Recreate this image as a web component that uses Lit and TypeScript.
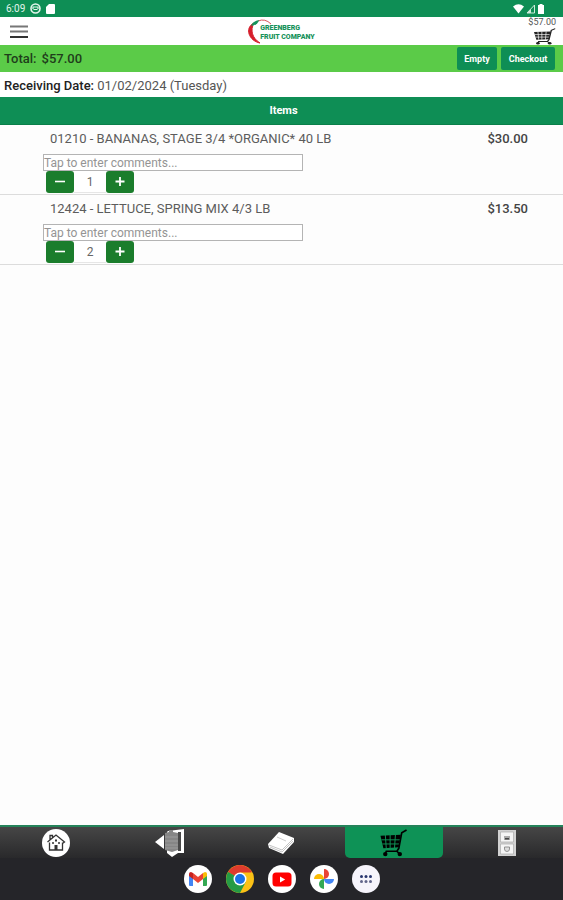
import { LitElement, html, css, svg } from "lit";
import { customElement, property, state } from "lit/decorators.js";
import { classMap } from "lit/directives/class-map.js";

interface CartItem {
  code: string;
  name: string;
  price: string;
  qty: number;
}

const cartShape = svg`
  <path d="M0 7 L21 6 L19 19 L3 20 Z" fill="currentColor"/>
  <path d="M1 11.200 H20.500 M2 15.500 H20 M5 6 L6 20 M10 6 V20 M15.500 6 L14.500 20" class="mesh"/>
  <path d="M27 1 L22 4 L19 20 L17 23 H6 L5 26 M17 23 L20 26" fill="none" stroke="currentColor" stroke-width="1.700"/>
  <circle cx="5" cy="26" r="2.300" fill="currentColor"/>
  <circle cx="20" cy="26" r="2.300" fill="currentColor"/>`;

const homeIcon = html`<svg width="30" height="30" viewBox="0 0 30 30" aria-hidden="true">
  <circle cx="15" cy="15" r="14" fill="#fff"/>
  <g fill="none" stroke="#333" stroke-width="1.300">
    <path d="M6.500 14 L15 7 L23.500 14 L21.500 15.500 M8.500 14.500 V22 H21.500 V14.500 M9 11.500 V7.500 H11.500 V9.500"/>
    <path d="M11 15 H13 M17 15 H19"/>
  </g>
  <path d="M13.500 22 V17 H16.500 V22 Z M14 11.500 H16 V13.500 H14 Z" fill="#333"/>
</svg>`;

const exitIcon = html`<svg width="30" height="30" viewBox="0 0 30 30" aria-hidden="true">
  <path d="M14 3 L30 1 V25 H24 L18 29 L13 25 V4 Z" fill="#fff"/>
  <path d="M24 4 H27 V23 H24 Z" fill="#4a4a4a"/>
  <path d="M11 5 L15 4 V2 H19 V4 L24 5 V22 L18 24 L11 22 Z" fill="#868686"/>
  <path d="M11 9 H24 M11 13 H24 M11 17 H24 M11 20 H24" stroke="#9c9c9c"/>
  <path d="M1 14 L10 7 V21 Z" fill="#fff"/>
</svg>`;

const bookIcon = html`<svg width="26" height="24" viewBox="0 0 26 24" aria-hidden="true">
  <path d="M0 13 L11 1 L26 7 V11 L15 23 L1 17 Z" fill="#fff"/>
  <path d="M1 14 L14 19 L25 8 M2 16 L14 21 L25 10" fill="none" stroke="#aaa" stroke-width=".7"/>
  <path d="M9 6 L18 10" stroke="#ccc" fill="none"/>
</svg>`;

const cartIcon = html`<svg width="28" height="28" viewBox="0 0 28 29" aria-hidden="true">${cartShape}</svg>`;

const cabinetIcon = html`<svg width="18" height="28" viewBox="0 0 18 28" aria-hidden="true">
  <path d="M0 1 H18 V27 H0 Z" fill="#d2d2d2"/>
  <path d="M2.500 3 H15.500 V13 H2.500 Z M2.500 15 H15.500 V25 H2.500 Z" fill="#f5f5f5" stroke="#aaa" stroke-width=".7"/>
  <path d="M6 7 H12 V11 H6 Z" fill="#aaa"/>
  <path d="M7 9 H11 V10.500 H7 Z" fill="#444"/>
  <path d="M6.500 18 H11.500 V20 A2.500 2.500 0 0 1 6.500 20 Z" fill="#ddd" stroke="#888" stroke-width=".9"/>
</svg>`;

const gmailIcon = html`<svg width="28" height="28" viewBox="0 0 28 28" aria-hidden="true">
  <circle cx="14" cy="14" r="14" fill="#fff"/>
  <path d="M5 8.500 L9 11.500 V21 H6 Q5 21 5 20 Z" fill="#4285f4"/>
  <path d="M23 8.500 L19 11.500 V21 H22 Q23 21 23 20 Z" fill="#34a853"/>
  <path d="M19 8 L21 7 Q23 7 23 9 V11 L19 14 Z" fill="#fbbc04"/>
  <path d="M5 11 V9 Q5 7 7 7 L9 8 V14 Z" fill="#c5221f"/>
  <path d="M9 8 L14 12 L19 8 V14 L14 18 L9 14 Z" fill="#ea4335"/>
</svg>`;

const chromeIcon = html`<svg width="28" height="28" viewBox="0 0 28 28" aria-hidden="true">
  <circle cx="14" cy="14" r="14" fill="#fbc116"/>
  <path d="M14 14 L1.900 7 A14 14 0 0 1 26.100 7 Z" fill="#de3b2d"/>
  <path d="M1.900 7 A14 14 0 0 0 14 28 L19.600 17.200 L14 14 Z" fill="#259b45"/>
  <path d="M14 7.500 H26.100 L19.600 17.200 Z" fill="#fbc116"/>
  <path d="M1.900 7 L8.400 17.200 L14 14 Z" fill="#259b45"/>
  <circle cx="14" cy="14" r="6.500" fill="#fff"/>
  <circle cx="14" cy="14" r="5" fill="#1a73e8"/>
</svg>`;

const youtubeIcon = html`<svg width="28" height="28" viewBox="0 0 28 28" aria-hidden="true">
  <circle cx="14" cy="14" r="14" fill="#fff"/>
  <rect x="4.500" y="7.500" width="19" height="14" rx="3.500" fill="#f00"/>
  <path d="M12 11.500 L17.200 14.500 L12 17.500 Z" fill="#fff"/>
</svg>`;

const photosIcon = html`<svg width="28" height="28" viewBox="0 0 28 28" aria-hidden="true">
  <circle cx="14" cy="14" r="14" fill="#fff"/>
  <path d="M14 14 V4 A5 5 0 0 1 14 14 Z" fill="#ea4335"/>
  <path d="M14 14 H24 A5 5 0 0 1 14 14 Z" fill="#4285f4"/>
  <path d="M14 14 V24 A5 5 0 0 1 14 14 Z" fill="#34a853"/>
  <path d="M14 14 H4 A5 5 0 0 1 14 14 Z" fill="#fbbc04"/>
</svg>`;

const appsIcon = html`<svg width="28" height="28" viewBox="0 0 28 28" aria-hidden="true">
  <circle cx="14" cy="14" r="14" fill="#f6f4fb"/>
  <g fill="#28356e">
    <circle cx="9.500" cy="11.500" r="1.500"/><circle cx="14" cy="11.500" r="1.500"/><circle cx="18.500" cy="11.500" r="1.500"/>
  </g>
  <g fill="#62668a">
    <circle cx="9.500" cy="16.500" r="1.500"/><circle cx="14" cy="16.500" r="1.500"/><circle cx="18.500" cy="16.500" r="1.500"/>
  </g>
</svg>`;

@customElement("cart-row")
export class CartRow extends LitElement {
  @property({ attribute: false }) item!: CartItem;

  static styles = css`
    :host {
      display: block;
      height: 70px;
      box-sizing: border-box;
      border-bottom: 1px solid #dcdcdc;
      color: #5c5c5c;
      font-size: 13px;
    }
    .line {
      display: flex;
      justify-content: space-between;
      padding: 4px 35px 0 50px;
      height: 29px;
      box-sizing: border-box;
      line-height: 20px;
    }
    .price {
      font-weight: 500;
      color: #444;
    }
    .entry {
      margin-left: 43px;
    }
    .comment {
      display: block;
      box-sizing: border-box;
      width: 50%;
      height: 17px;
      margin: 0;
      padding: 0;
      border: 1px solid #b4b4b4;
      border-radius: 0;
      background: #fff;
      color: #555;
      font: 12px/15px Roboto, sans-serif;
    }
    .comment::placeholder {
      color: #949494;
      opacity: 1;
    }
    .stepper {
      display: flex;
      margin-left: 3px;
      height: 22px;
    }
    .step {
      display: flex;
      align-items: center;
      justify-content: center;
      width: 28px;
      padding: 0;
      border: 0;
      border-radius: 3px;
      background: #1b7d2c;
      color: #fff;
    }
    .qty {
      width: 32px;
      box-sizing: border-box;
      padding: 0;
      border: 0;
      border-bottom: 1px solid #e6e6e6;
      border-radius: 0;
      background: #fff;
      color: #666;
      text-align: center;
      font: 12px/20px Roboto, sans-serif;
    }
  `;

  private change(delta: number) {
    this.item = { ...this.item, qty: Math.max(0, this.item.qty + delta) };
  }

  render() {
    const { code, name, price, qty } = this.item;
    return html`
      <div class="line">
        <span>${code} - ${name}</span>
        <span class="price">${price}</span>
      </div>
      <div class="entry">
        <input class="comment" type="text" aria-label="Comments" placeholder="Tap to enter comments..." />
        <div class="stepper">
          <button class="step" aria-label="Decrease" @click=${() => this.change(-1)}>
            <svg width="10" height="10" viewBox="0 0 10 10"><path d="M0 4.500 H10" stroke="#fff" stroke-width="1.600"/></svg>
          </button>
          <input class="qty" type="text" inputmode="numeric" aria-label="Quantity" .value=${String(qty)} />
          <button class="step" aria-label="Increase" @click=${() => this.change(1)}>
            <svg width="10" height="10" viewBox="0 0 10 10"><path d="M.5 4.500 H9.500 M5 0 V9" stroke="#fff" stroke-width="1.800"/></svg>
          </button>
        </div>
      </div>
    `;
  }
}

@customElement("app-root")
export class AppRoot extends LitElement {
  @state() private activeTab = "Cart";

  private items: CartItem[] = [
    { code: "01210", name: "BANANAS, STAGE 3/4 *ORGANIC* 40 LB", price: "$30.00", qty: 1 },
    { code: "12424", name: "LETTUCE, SPRING MIX 4/3 LB", price: "$13.50", qty: 2 },
  ];

  private tabs = [
    { label: "Home", icon: homeIcon },
    { label: "Exit", icon: exitIcon },
    { label: "Catalog", icon: bookIcon },
    { label: "Cart", icon: cartIcon },
    { label: "Orders", icon: cabinetIcon },
  ];

  private apps = [
    { label: "Gmail", icon: gmailIcon },
    { label: "Chrome", icon: chromeIcon },
    { label: "YouTube", icon: youtubeIcon },
    { label: "Photos", icon: photosIcon },
    { label: "All apps", icon: appsIcon },
  ];

  static styles = css`
    :host {
      display: flex;
      flex-direction: column;
      min-height: 100vh;
      background: #fdfdfd;
      color: #333;
      font-family: Roboto, sans-serif;
      font-size: 13px;
    }
    svg {
      display: block;
    }
    button {
      padding: 0;
      border: 0;
      background: none;
      font-family: inherit;
    }
    .status {
      display: flex;
      align-items: center;
      gap: 5px;
      height: 17px;
      padding: 0 18px 0 6px;
      background: #0e8e55;
      color: #e4f5ec;
      font-size: 10px;
    }
    .signals {
      display: flex;
      gap: 2px;
      margin-left: auto;
    }
    .header {
      display: grid;
      grid-template-columns: 1fr auto 1fr;
      align-items: center;
      height: 28px;
      padding: 0 7px 0 10px;
      background: #fff;
    }
    .menu {
      justify-self: start;
    }
    .brand {
      display: flex;
      align-items: center;
      padding-right: 4px;
    }
    .brand-name {
      margin-left: -12px;
      padding-top: 4px;
      color: #16925a;
      font-size: 7px;
      font-weight: 900;
      line-height: 9px;
    }
    .brand-name span {
      display: block;
    }
    .mini-cart {
      display: flex;
      flex-direction: column;
      align-items: flex-end;
      justify-self: end;
      color: #222;
    }
    .mini-total {
      color: #555;
      font-size: 9px;
      line-height: 11px;
    }
    .mesh {
      fill: none;
      stroke: var(--mesh, #fff);
      stroke-width: 1;
    }
    .totals {
      display: flex;
      align-items: center;
      gap: 4px;
      height: 27px;
      padding: 0 8px 0 4px;
      background: #5bcb48;
      color: #1f3d1b;
    }
    .total {
      display: flex;
      gap: 5px;
      margin-right: auto;
      font-weight: 500;
    }
    .action {
      height: 23px;
      border-radius: 2px;
      background: #0e8e55;
      color: #fff;
      font-size: 9px;
      font-weight: 700;
    }
    .empty {
      width: 40px;
    }
    .checkout {
      width: 54px;
    }
    .date {
      padding: 0 4px;
      color: #555;
      line-height: 27px;
      height: 25px;
      background: #fff;
    }
    .date strong {
      color: #222;
      font-weight: 500;
    }
    .section {
      margin: 0;
      height: 28px;
      box-sizing: border-box;
      border-bottom: 1px solid #0a7f4a;
      padding-left: 4px;
      background: #0e8e55;
      color: #fff;
      font-size: 11px;
      font-weight: 700;
      line-height: 27px;
      text-align: center;
    }
    .list {
      flex: 1;
    }
    .tabs {
      display: flex;
      height: 33px;
      box-sizing: border-box;
      border-top: 2px solid #25835a;
      background: linear-gradient(#464646, #29292b);
    }
    .tab {
      display: flex;
      flex: 1;
      align-items: center;
      justify-content: center;
      margin: 0 7px;
      border-radius: 0 0 5px 5px;
      color: #000;
    }
    .active {
      --mesh: #0e9256;
      background: #0e9256;
    }
    .dock {
      display: flex;
      justify-content: center;
      gap: 14px;
      height: 42px;
      padding-top: 7px;
      box-sizing: border-box;
      background: #252529;
    }
    .dock button {
      height: 28px;
    }
  `;

  render() {
    return html`
      <div class="status">
        <span>6:09</span>
        <svg width="11" height="11" viewBox="0 0 11 11" aria-hidden="true">
          <circle cx="5.500" cy="5.500" r="4.500" fill="none" stroke="#e4f5ec" stroke-width="1.600"/>
          <path d="M3 6 V4 H8 V6 M3.500 6.500 H7.500" fill="none" stroke="#e4f5ec" stroke-width="1.200"/>
        </svg>
        <svg width="9" height="10" viewBox="0 0 9 10" aria-hidden="true">
          <path d="M3 0 H8 Q9 0 9 1 V9 Q9 10 8 10 H1 Q0 10 0 9 V3 Z" fill="#fff"/>
        </svg>
        <span class="signals">
          <svg width="11" height="10" viewBox="0 0 11 10" aria-hidden="true"><path d="M0 2.500 Q5.500 -2 11 2.500 L5.500 9.500 Z" fill="#fff"/></svg>
          <svg width="9" height="10" viewBox="0 0 9 10" aria-hidden="true">
            <path d="M1 9 L8.500 1 V9 Z" fill="none" stroke="#cfeadb"/><path d="M1 9 L5 5 V9 Z" fill="#cfeadb"/>
          </svg>
          <svg width="8" height="10" viewBox="0 0 8 10" aria-hidden="true"><path d="M1 1 H2.500 V0 H5.500 V1 H7 V10 H1 Z" fill="#fff"/></svg>
        </span>
      </div>

      <header class="header">
        <button class="menu" aria-label="Menu">
          <svg width="18" height="16" viewBox="0 0 18 16">
            <path d="M0 3.500 H18 M0 8.500 H18" stroke="#777" stroke-width="2"/>
            <path d="M0 14 H18" stroke="#333" stroke-width="2"/>
          </svg>
        </button>
        <div class="brand">
          <svg width="25" height="28" viewBox="0 0 25 28" aria-hidden="true">
            <path d="M13 26 C2 24 -3 11 7 6 C3 13 5 21 13 26 Z" fill="#d61f2c" stroke="#d61f2c"/>
            <path d="M11 4 Q18 1 24 7" fill="none" stroke="#d9545a"/>
            <path d="M4 9 Q6 4 12 3 Q11 8 4 9 Z" fill="#16925a"/>
          </svg>
          <div class="brand-name"><span>GREENBERG</span><span>FRUIT COMPANY</span></div>
        </div>
        <button class="mini-cart" aria-label="Cart, $57.00">
          <span class="mini-total">$57.00</span>
          <svg width="22" height="17" viewBox="0 0 28 29" preserveAspectRatio="none" aria-hidden="true">${cartShape}</svg>
        </button>
      </header>

      <div class="totals">
        <div class="total"><span>Total:</span><span>$57.00</span></div>
        <button class="action empty">Empty</button>
        <button class="action checkout">Checkout</button>
      </div>
      <div class="date"><strong>Receiving Date:</strong> 01/02/2024 (Tuesday)</div>
      <h2 class="section">Items</h2>

      <main class="list">${this.items.map((item) => html`<cart-row .item=${item}></cart-row>`)}</main>

      <nav class="tabs" aria-label="Sections">
        ${this.tabs.map(
          (tab) => html`<button
            class=${classMap({ tab: true, active: tab.label === this.activeTab })}
            aria-label=${tab.label}
            @click=${() => (this.activeTab = tab.label)}
          >${tab.icon}</button>`
        )}
      </nav>
      <div class="dock">
        ${this.apps.map((app) => html`<button aria-label=${app.label}>${app.icon}</button>`)}
      </div>
    `;
  }
}
